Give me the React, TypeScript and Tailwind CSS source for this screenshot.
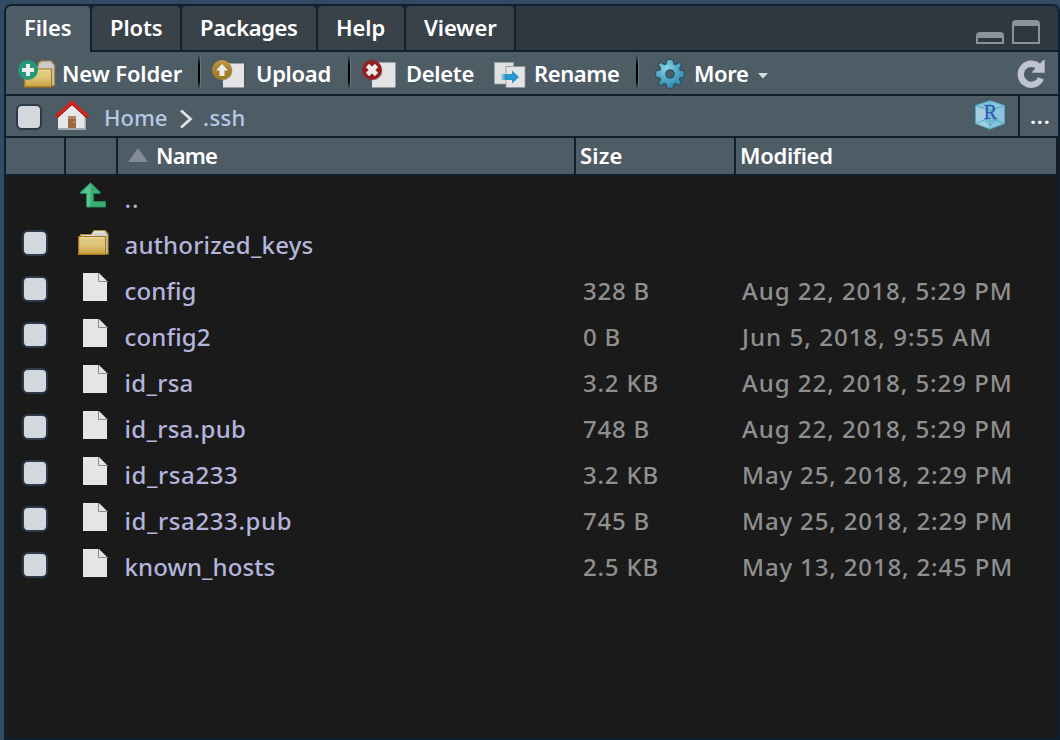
import React from "react";

type FileRow = {
  name: string;
  kind: "up" | "folder" | "file";
  size?: string;
  modified?: string;
  tracking: string;
  dateTracking?: string;
};

const files: FileRow[] = [
  { name: "..", kind: "up", tracking: "tracking-[1px]" },
  { name: "authorized_keys", kind: "folder", tracking: "tracking-[0.2px]" },
  { name: "config", kind: "file", size: "328 B", modified: "Aug 22, 2018, 5:29 PM", tracking: "tracking-[0.1px]", dateTracking: "tracking-[0.97px]" },
  { name: "config2", kind: "file", size: "0 B", modified: "Jun 5, 2018, 9:55 AM", tracking: "tracking-[0.15px]", dateTracking: "tracking-[1.05px]" },
  { name: "id_rsa", kind: "file", size: "3.2 KB", modified: "Aug 22, 2018, 5:29 PM", tracking: "tracking-[0.3px]", dateTracking: "tracking-[0.97px]" },
  { name: "id_rsa.pub", kind: "file", size: "748 B", modified: "Aug 22, 2018, 5:29 PM", tracking: "tracking-[0.3px]", dateTracking: "tracking-[0.97px]" },
  { name: "id_rsa233", kind: "file", size: "3.2 KB", modified: "May 25, 2018, 2:29 PM", tracking: "tracking-[0.6px]", dateTracking: "tracking-[0.85px]" },
  { name: "id_rsa233.pub", kind: "file", size: "745 B", modified: "May 25, 2018, 2:29 PM", tracking: "tracking-[0.6px]", dateTracking: "tracking-[0.85px]" },
  { name: "known_hosts", kind: "file", size: "2.5 KB", modified: "May 13, 2018, 2:45 PM", tracking: "tracking-[0.1px]", dateTracking: "tracking-[0.85px]" },
];

const tabs = [
  { label: "Plots", cls: "w-[88px] pl-[18px] tracking-[-0.1px]" },
  { label: "Packages", cls: "w-[134px] pl-[18px] tracking-[-0.4px]" },
  { label: "Help", cls: "w-[86px] pl-[18px] tracking-[-0.1px]" },
  { label: "Viewer", cls: "w-[108px] pl-[18px] tracking-[-0.1px]" },
];

function FolderShape() {
  return (
    <g>
      <path d="M2.5 8.5V5.5h10.5l3-4h11l3 3.5v20H27" fill="#d3d3d3" stroke="#b08a2e" strokeWidth="1.2" />
      <path d="M4 7.5V7h9.5l3-4h10" fill="none" stroke="#eeeeee" />
      <rect x="0.6" y="7.6" width="27" height="17.8" fill="url(#folderFill)" stroke="#a77713" strokeWidth="1.2" />
      <path d="M1.8 8.8h24.6" stroke="#efe3ae" />
    </g>
  );
}

function Defs() {
  return (
    <svg className="absolute h-0 w-0" aria-hidden="true">
      <defs>
        <linearGradient id="folderFill" x1="0" y1="0" x2="0" y2="1">
          <stop offset="0" stopColor="#dccd84" />
          <stop offset="0.45" stopColor="#dfc77a" />
          <stop offset="1" stopColor="#cba041" />
        </linearGradient>
        <linearGradient id="gold" x1="0" y1="0" x2="0" y2="1">
          <stop offset="0" stopColor="#c29a48" />
          <stop offset="0.5" stopColor="#a98127" />
          <stop offset="1" stopColor="#9b7b25" />
        </linearGradient>
        <linearGradient id="renameArrow" x1="0" y1="0" x2="1" y2="0">
          <stop offset="0" stopColor="#2a97cc" stopOpacity="0.15" />
          <stop offset="0.25" stopColor="#2a97cc" />
          <stop offset="1" stopColor="#2596ce" />
        </linearGradient>
        <radialGradient id="gearFill" cx="0.38" cy="0.3" r="0.75">
          <stop offset="0" stopColor="#8ad6e2" />
          <stop offset="0.5" stopColor="#55aac4" />
          <stop offset="1" stopColor="#2c86ac" />
        </radialGradient>
        <linearGradient id="separator" x1="0" y1="0" x2="0" y2="1">
          <stop offset="0" stopColor="#000" stopOpacity="0" />
          <stop offset="0.3" stopColor="#000" />
          <stop offset="0.75" stopColor="#000" />
          <stop offset="1" stopColor="#000" stopOpacity="0" />
        </linearGradient>
      </defs>
    </svg>
  );
}

function Separator() {
  return (
    <svg className="h-[34px] w-[4px] shrink-0" viewBox="0 0 4 34">
      <rect width="2" height="34" fill="url(#separator)" />
      <rect x="2" y="2" width="1" height="30" fill="#7a868e" opacity="0.6" />
    </svg>
  );
}

function NewFolderIcon() {
  return (
    <svg className="h-[30px] w-[40px] shrink-0" viewBox="0 0 40 30">
      <path d="M19 9l2-6.5 2.5-1.5H33l3.5 4V25.5H34" fill="#c9cacb" stroke="#a98a3c" strokeWidth="1.2" />
      <rect x="6.6" y="9.1" width="27" height="17.8" fill="url(#folderFill)" stroke="#a77713" strokeWidth="1.2" />
      <path d="M20 10.3h12.5" stroke="#efe3ae" />
      <circle cx="10" cy="10" r="10" fill="#27997a" />
      <path d="M8 4h4v4h4v4h-4v4H8v-4H4V8h4z" fill="#ececec" />
    </svg>
  );
}

function UploadIcon() {
  return (
    <svg className="h-[30px] w-[36px] shrink-0" viewBox="0 0 36 30">
      <rect x="12" y="4" width="20.6" height="24" fill="#3d4850" opacity="0.5" />
      <rect x="11" y="3.5" width="21" height="24" fill="#e4e4e6" />
      <circle cx="11" cy="11" r="9.5" fill="#59636a" opacity="0.35" />
      <circle cx="10" cy="10" r="10" fill="url(#gold)" />
      <path d="M10 4l6 6.5h-3.5V16h-5v-5.500H4z" fill="#ececec" />
    </svg>
  );
}

function DeleteIcon() {
  return (
    <svg className="h-[30px] w-[36px] shrink-0" viewBox="0 0 36 30">
      <rect x="11" y="3" width="23" height="25" fill="#3d4850" opacity="0.5" />
      <rect x="10" y="2.500" width="23.500" height="25" fill="#e4e4e4" />
      <circle cx="11" cy="11" r="9.5" fill="#59636a" opacity="0.35" />
      <circle cx="10" cy="10" r="10" fill="#971f1f" />
      <path d="M5.500 5.500l9 9M14.500 5.500l-9 9" stroke="#ececec" strokeWidth="4.600" />
    </svg>
  );
}

function RenameIcon() {
  return (
    <svg className="h-[28px] w-[32px] shrink-0" viewBox="0 0 32 28">
      <rect x="0.500" y="0.500" width="19" height="21.500" fill="#dfe0e0" stroke="#9aa1a4" strokeWidth="0.8" />
      <rect x="12" y="4.500" width="19" height="21" fill="#e4e4e6" stroke="#8d9598" strokeWidth="0.8" />
      <path d="M7 12h11V8.500l7 6.500-7 6.500V18H7z" fill="url(#renameArrow)" />
    </svg>
  );
}

function GearIcon() {
  const outline =
    "M-2.400 -13.700Q0 -14.500 2.400 -13.700L3.500 -9.600L5.600 -8.700L9.300 -10.900L11 -9.200L8.800 -5.500L9.600 -3.500L13.800 -2.400V2.400L9.600 3.500L8.800 5.500L11 9.200L9.300 10.900L5.600 8.700L3.500 9.600L2.400 13.700H-2.400L-3.500 9.600L-5.600 8.700L-9.300 10.900L-11 9.200L-8.800 5.500L-9.600 3.500L-13.800 2.400V-2.400L-9.600 -3.500L-8.800 -5.500L-11 -9.200L-9.300 -10.900L-5.600 -8.700L-3.500 -9.600Z";
  return (
    <svg className="h-[32px] w-[32px] shrink-0" viewBox="-16 -16 32 32">
      <path d={outline} fill="#2b5268" stroke="#2b5268" strokeWidth="2.600" strokeLinejoin="round" />
      <path d={outline} fill="url(#gearFill)" />
      <circle r="4.200" fill="#4c5b66" stroke="#27546c" strokeWidth="1.300" />
    </svg>
  );
}

function RefreshIcon() {
  return (
    <svg className="h-[30px] w-[28px] shrink-0" viewBox="0 0 28 30">
      <path d="M23.600 19A11.300 11.300 0 1 1 22 7.500" fill="none" stroke="#bfc4d0" strokeWidth="6.800" transform="translate(2 1.700) scale(0.930)" />
      <path d="M27.700 1v12.700H15.200v-1L26.500 1z" fill="#bfc4d0" />
    </svg>
  );
}

function HomeIcon() {
  return (
    <svg className="h-[30px] w-[34px] shrink-0" viewBox="0 0 34 30">
      <path d="M3 15L17 2.500 31 15V29.500H3z" fill="#e6e7e9" />
      <path d="M3 28h28v1.700H3zM29.500 15H31v14.500h-1.500z" fill="#a4a9ad" />
      <rect x="13" y="16" width="8" height="12" fill="#9c6b45" />
      <path d="M13 16h8v3h-8z" fill="#b78561" />
      <circle cx="19" cy="22" r="0.800" fill="#d7b98f" />
      <path d="M1.300 17L17 2.700 32.700 17" fill="none" stroke="#8f1512" strokeWidth="3.600" />
      <path d="M1.300 16.400L17 2.100 32.700 16.400" fill="none" stroke="#e32219" strokeWidth="2.400" />
    </svg>
  );
}

function ProjectIcon() {
  return (
    <svg className="h-[30px] w-[30px] shrink-0" viewBox="0 0 30 30">
      <path d="M15 0.700L29.500 5.500V23.500L15 29 0.500 23.500V5.500z" fill="#8fc3dc" stroke="#4da9c4" />
      <path d="M1 6l13.500 5v17.500L1 23.500z" fill="#a9d3e6" opacity="0.700" />
      <path d="M15 1v27.500M1 5.800L15 10.500 29 5.800M1 23.500l14-6 14 6M10 21l5 4 5-4z" fill="none" stroke="#4fabc4" />
      <text x="15.500" y="18.800" textAnchor="middle" fill="#2b58b5" stroke="#2b58b5" strokeWidth="0.300" fontSize="20" fontFamily="Liberation Serif, serif">R</text>
    </svg>
  );
}

function UpIcon() {
  return (
    <svg className="h-[28px] w-[28px]" viewBox="0 0 28 28">
      <path d="M10.500 0.700L20 10V11.500H13.500V19.500H25.500V25H6.500V11.500H0.500V10z" fill="#3aae73" stroke="#26895a" />
      <path d="M10.500 2V24.500H7V11H1.500z" fill="#59c48d" />
    </svg>
  );
}

function FileIcon() {
  return (
    <svg className="h-[28px] w-[26px]" viewBox="0 0 26 28">
      <path d="M0 0H16L24 8V28H0z" fill="#e5e5e5" />
      <path d="M15.500 0V8.500H25" fill="none" stroke="#8a8a8a" />
    </svg>
  );
}

function RowIcon({ kind }: { kind: FileRow["kind"] }) {
  if (kind === "up") return <div className="pl-[14px] pt-[6px]"><UpIcon /></div>;
  if (kind === "folder")
    return (
      <div className="pl-[12px] pt-[7px]">
        <svg className="h-[27px] w-[32px]" viewBox="0 0 32 27"><FolderShape /></svg>
      </div>
    );
  return <div className="pl-[17px] pt-[5px]"><FileIcon /></div>;
}

function Checkbox() {
  return <div className="h-[26px] w-[26px] shrink-0 rounded-[6px] border-2 border-[#2a3a4a] bg-[#d3d8dc]" />;
}

export default function App() {
  return (
    <div className="h-[740px] w-[1060px] overflow-hidden bg-[#324b62] pl-[4px] pt-[4px] font-['Noto_Sans',sans-serif] text-[22px] leading-[28px] whitespace-nowrap text-white">
      <Defs />
      <div className="flex h-[736px] w-[1056px] flex-col overflow-hidden rounded-t-[7px] border-2 border-[#0f2030] bg-[#1a1a1a]">
        <div className="flex h-[46px] shrink-0 bg-[#2f3840] font-semibold">
          <div className="h-[46px] w-[84px] rounded-t-[5px] bg-[#4e5c66] pl-[18px] pt-[7px] tracking-[-0.1px]">Files</div>
          <div className="flex gap-[2px] border-b-2 border-[#0f2030] bg-[#0f2030] px-[2px]">
            {tabs.map((t) => (
              <div key={t.label} className={"h-[44px] rounded-t-[4px] bg-[#394249] pt-[7px] " + t.cls}>{t.label}</div>
            ))}
          </div>
          <div className="flex flex-1 justify-end gap-[8px] border-b-2 border-[#0f2030] pr-[18px]">
            <div className="mt-[26px] h-[12px] w-[28px] rounded-t-[4px] border-2 border-t-[6px] border-[#8b9399]" />
            <div className="mt-[14px] h-[24px] w-[28px] rounded-t-[4px] border-2 border-t-[6px] border-[#8b9399]" />
          </div>
        </div>

        <div className="flex h-[44px] shrink-0 items-start border-b-2 border-[#0f2030] bg-[#4e5c66] font-semibold">
          <div className="flex w-[192px] pl-[12px]">
            <div className="pt-[8px]"><NewFolderIcon /></div>
            <span className="pl-[4px] pt-[7px] tracking-[-0.15px]">New Folder</span>
          </div>
          <div className="pt-[3px]"><Separator /></div>
          <div className="flex w-[146px] pl-[10px]">
            <div className="pt-[8px]"><UploadIcon /></div>
            <span className="pl-[8px] pt-[7px] tracking-[-0.3px]">Upload</span>
          </div>
          <div className="pt-[3px]"><Separator /></div>
          <div className="flex w-[142px] pl-[10px]">
            <div className="pt-[8px]"><DeleteIcon /></div>
            <span className="pl-[8px] pt-[7px] tracking-[-0.3px]">Delete</span>
          </div>
          <div className="flex w-[142px]">
            <div className="pt-[10px]"><RenameIcon /></div>
            <span className="pl-[8px] pt-[7px] tracking-[-0.4px]">Rename</span>
          </div>
          <div className="pt-[3px]"><Separator /></div>
          <div className="flex w-[132px] pl-[14px]">
            <div className="pt-[6px]"><GearIcon /></div>
            <span className="w-[72px] shrink-0 pl-[8px] pt-[7px] tracking-[-0.4px]">More</span>
            <svg className="mt-[21px] h-[6px] w-[10px] shrink-0" viewBox="0 0 10 6"><path d="M0 0h10L5 5.500z" fill="#d9dcde" /></svg>
          </div>
          <div className="ml-auto pr-[13px] pt-[7px]"><RefreshIcon /></div>
        </div>

        <div className="flex h-[42px] shrink-0 border-b-2 border-[#0f2030] bg-[#4e5c66]">
          <div className="w-[49px] pl-[10px] pt-[8px]"><Checkbox /></div>
          <div className="pt-[4px]"><HomeIcon /></div>
          <span className="w-[89px] pl-[15px] pt-[7px] font-medium text-[#b5c9e6]">Home</span>
          <svg className="mt-[13px] h-[20px] w-[16px]" viewBox="0 0 16 20">
            <path d="M3 1.500l9.500 8.500-9.500 8.500" fill="none" stroke="#dfe3e6" strokeWidth="2.800" />
          </svg>
          <span className="pl-[9px] pt-[7px] font-medium tracking-[0.4px] text-[#b5c9e6]">.ssh</span>
          <div className="ml-auto pr-[13px] pt-[4px]"><ProjectIcon /></div>
          <div className="w-[40px] border-l-2 border-[#0f2030] pl-[10px] pt-[5px] font-semibold tracking-[0.800px]">...</div>
        </div>

        <div className="flex h-[38px] w-[1050px] shrink-0 border-b-2 border-[#0f2030] bg-[#4e5c66] font-semibold">
          <div className="w-[60px] border-r-2 border-[#0f2030]" />
          <div className="w-[52px] border-r-2 border-[#0f2030]" />
          <div className="flex w-[458px] border-r-2 border-[#0f2030] pl-[10px] pt-[3px]">
            <svg className="mt-[7px] h-[14px] w-[20px]" viewBox="0 0 20 14"><path d="M10 0l10 14H0z" fill="#828a96" /></svg>
            <span className="pl-[8px] tracking-[-0.8px]">Name</span>
          </div>
          <div className="w-[160px] border-r-2 border-[#0f2030] pl-[4px] pt-[3px] tracking-[0.2px]">Size</div>
          <div className="pl-[4px] pt-[3px] tracking-[-0.3px]">Modified</div>
        </div>

        <div className="flex-1 text-[24px] leading-[32px]">
          {files.map((f) => (
            <div key={f.name} className="flex h-[46px]">
              <div className="w-[60px] pl-[16px] pt-[8px]">{f.kind !== "up" && <Checkbox />}</div>
              <div className="w-[58px]"><RowIcon kind={f.kind} /></div>
              <div className={"w-[459px] pl-[0.5px] pt-[7px] font-medium text-[#b4b4dc] " + f.tracking}>{f.name}</div>
              <div className="w-[159px] pt-[7px] font-medium tracking-[0.800px] text-[#8f8f8f]">{f.size}</div>
              <div className={"pt-[7px] font-medium text-[#8f8f8f] " + (f.dateTracking ?? "")}>{f.modified}</div>
            </div>
          ))}
        </div>
      </div>
    </div>
  );
}
